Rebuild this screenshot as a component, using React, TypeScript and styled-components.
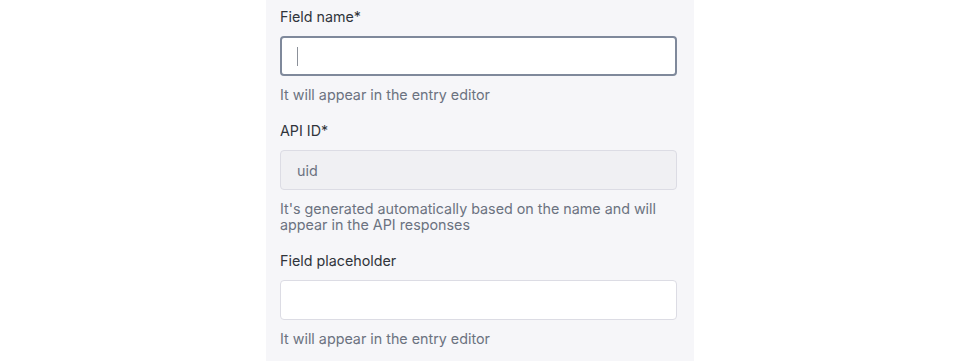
import React from "react";
import styled, { createGlobalStyle } from "styled-components";

const Global = createGlobalStyle`
  html, body { margin: 0; padding: 0; background: #ffffff; }
  body { font-family: Inter, "Noto Sans", sans-serif; -webkit-font-smoothing: antialiased; }
`;

const Panel = styled.div`
  width: 428px;
  height: 361px;
  margin: 0 auto;
  box-sizing: border-box;
  background: #f6f6f9;
  padding: 7px 17px 0 14px;
  display: flex;
  flex-direction: column;
  gap: 18px;
`;

const Field = styled.div`
  display: flex;
  flex-direction: column;
`;

const Label = styled.label`
  font-size: 14.3px;
  font-weight: 400;
  line-height: 20px;
  color: #30343b;
  margin-bottom: 9px;
`;

const InputBox = styled.div<{ $focused?: boolean; $disabled?: boolean }>`
  height: 40px;
  box-sizing: border-box;
  border-radius: 4px;
  border: ${(p) => (p.$focused ? "2px solid #7f899b" : "1px solid #dcdce4")};
  background: ${(p) => (p.$disabled ? "#f0f0f3" : "#ffffff")};
  display: flex;
  align-items: center;
  padding-left: ${(p) => (p.$focused ? "15px" : "16px")};
  font-size: 14.3px;
  color: #6b7280;
`;

const Caret = styled.span`
  display: block;
  width: 1px;
  height: 19px;
  background: #8c919a;
`;

const Helper = styled.p`
  margin: 11px 0 0;
  font-size: 14.3px;
  line-height: 16px;
  color: #6b7280;
`;

export default function App() {
  return (
    <>
      <Global />
      <Panel>
        <Field>
          <Label>Field name*</Label>
          <InputBox $focused>
            <Caret />
          </InputBox>
          <Helper>It will appear in the entry editor</Helper>
        </Field>
        <Field>
          <Label>API ID*</Label>
          <InputBox $disabled>uid</InputBox>
          <Helper>
            It's generated automatically based on the name and will appear in the API responses
          </Helper>
        </Field>
        <Field>
          <Label>Field placeholder</Label>
          <InputBox />
          <Helper>It will appear in the entry editor</Helper>
        </Field>
      </Panel>
    </>
  );
}
